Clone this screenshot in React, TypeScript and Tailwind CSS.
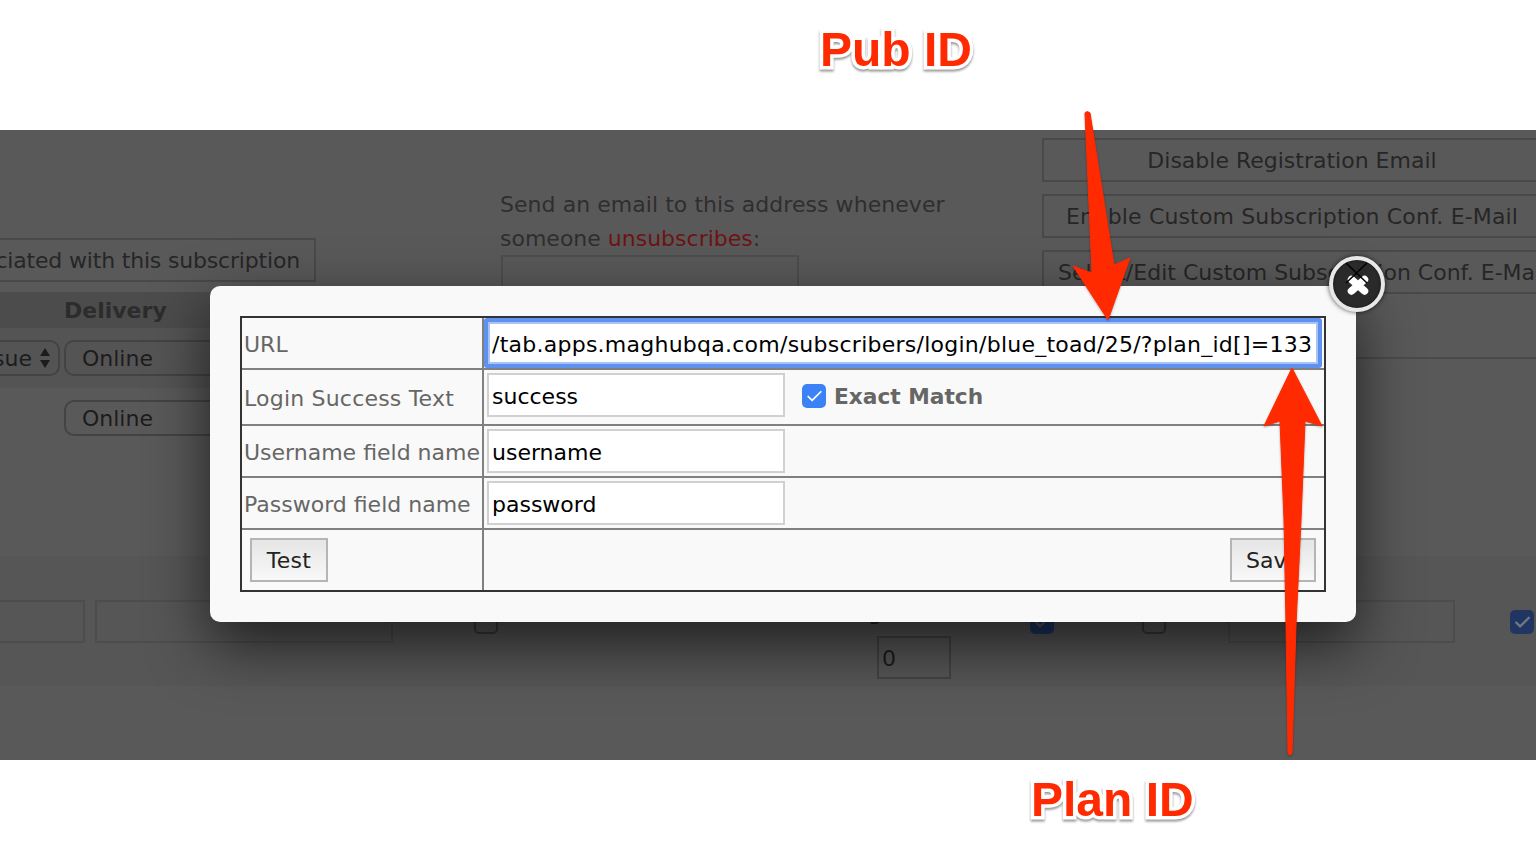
import React from 'react';
import { Check } from 'lucide-react';

const labelCell = 'p-0 pl-[2px] pt-[2px] text-[22px] text-[#666] border-r-2 border-[#808080] whitespace-nowrap';
const rowLine = 'border-b-2 border-[#808080]';
const fieldInput = 'block w-[298px] h-[44px] ml-[3px] px-[3px] pt-[2px] border-2 border-[#d0d0d0] bg-white text-[22px] text-black outline-none';
const dimButton = 'flex items-center justify-center w-[500px] h-[44px] shrink-0 border-2 border-[#4a494a] text-[22px] text-[#262626] whitespace-nowrap';
const dimSelect = 'flex items-center h-[36px] border-2 border-[#444344] rounded-[10px] text-[22px] text-[#1c1c1c]';
const dimInput = 'h-[43px] border-2 border-[#4e4d4e] shrink-0';

const BlueCheck = ({ className, stroke = 2.2 }: { className: string; stroke?: number }) => (
    <div className={`flex items-center justify-center w-[24px] h-[24px] rounded-[5px] ${className}`}>
        <Check className="w-[19px] h-[19px]" strokeWidth={stroke} />
    </div>
);

const Annotation = ({ text }: { text: string }) => (
    <span className="font-['Liberation_Sans',sans-serif] font-bold text-[48px] leading-none text-[#ff2a00] [-webkit-text-stroke:7px_white] [paint-order:stroke_fill] drop-shadow-[0_2px_1px_rgba(0,0,0,0.4)]">
        {text}
    </span>
);

const App = () => {
    return (
        <div className="relative w-[1536px] h-[842px] overflow-hidden bg-white font-['DejaVu_Sans',sans-serif]">
            {/* Top annotation */}
            <div className="h-[130px] pl-[820px] pt-[26px]">
                <Annotation text="Pub ID" />
            </div>

            {/* Dimmed page */}
            <div className="relative h-[630px] bg-[#5a595a] overflow-hidden">
                <div className="flex h-[426px]">
                    <div className="w-[500px] shrink-0 pt-[108px]">
                        <div className="flex items-center justify-end w-[316px] h-[44px] pr-[14px] border-2 border-l-0 border-[#4a494a] text-[22px] tracking-[-0.18px] text-[#262626] whitespace-nowrap">
                            ciated with this subscription
                        </div>
                        <div className="mt-[10px] h-[36px] pl-[64px] pt-[1px] bg-[#4d4c4d] text-[22px] leading-[36px] font-bold text-[#2c2c2c]">
                            Delivery
                        </div>
                        <div className="flex items-center gap-[4px] h-[60px] bg-[#555455]">
                            <div className={`${dimSelect} w-[60px] border-l-0 rounded-l-none justify-end gap-[8px] pr-[8px]`}>
                                sue
                                <svg className="w-[10px] h-[20px] shrink-0" viewBox="0 0 10 20" fill="#1c1c1c">
                                    <path d="M5 0L10 8H0zM5 20L0 12h10z" />
                                </svg>
                            </div>
                            <div className={`${dimSelect} w-[200px] pl-[16px]`}>Online</div>
                        </div>
                        <div className="flex items-center h-[60px] pl-[64px]">
                            <div className={`${dimSelect} w-[200px] pl-[16px]`}>Online</div>
                        </div>
                    </div>

                    <div className="w-[542px] shrink-0 pt-[58px]">
                        <p className="text-[22px] leading-[34px] text-[#2e2e2e] whitespace-nowrap">
                            <span className="tracking-[0.05px]">Send an email to this address whenever</span>
                            <br />
                            someone <span className="text-[#6c1414]">unsubscribes</span>:
                        </p>
                        <div className="-mt-[1px] ml-[1px] w-[298px] h-[44px] border-2 border-[#4e4d4e]" />
                    </div>

                    <div className="flex-1 min-w-0 flex flex-col gap-[12px] pt-[8px] overflow-hidden">
                        <div className={dimButton}>Disable Registration Email</div>
                        <div className={`${dimButton} tracking-[0.15px]`}>Enable Custom Subscription Conf. E-Mail</div>
                        <div className={`${dimButton} justify-start pl-[14px]`}>Select/Edit Custom Subscription Conf. E-Mail</div>
                        <div className="mt-[51px] border-t-2 border-[#4c4b4c]" />
                    </div>
                </div>

                {/* Darker row with the inputs */}
                <div className="flex h-[130px] bg-[#575657] pt-[44px]">
                    <div className={`${dimInput} w-[85px] border-l-0`} />
                    <div className={`${dimInput} w-[298px] ml-[10px]`} />
                    <div className="w-[24px] h-[34px] ml-[81px] border-2 border-[#3a393a] rounded-[5px] shrink-0" />
                    <div className="w-[74px] ml-[379px] shrink-0">
                        <div className="h-[36px] -ml-[9px] text-[22px] leading-[26px] text-[#1c1c1c]">g</div>
                        <div className="h-[43px] pl-[3px] border-2 border-[#444344] text-[22px] leading-[41px] text-[#1c1c1c]">0</div>
                    </div>
                    <BlueCheck className="ml-[79px] mt-[10px] bg-[#1f3564] text-[#565656] shrink-0" stroke={3} />
                    <div className="w-[24px] h-[34px] ml-[88px] border-2 border-[#3a393a] rounded-[5px] shrink-0" />
                    <div className={`${dimInput} w-[227px] ml-[62px]`} />
                    <BlueCheck className="ml-[55px] mt-[10px] bg-[#213563] text-[#6f7684] shrink-0" stroke={3} />
                </div>

                {/* Modal */}
                <div className="absolute left-[210px] top-[156px] w-[1146px] h-[336px] p-[30px] rounded-[10px] bg-[#f9f9f9] shadow-[0_22px_60px_rgba(0,0,0,0.65)]">
                    <div className="border-2 border-[#333]">
                        <table className="w-full table-fixed border-collapse">
                            <colgroup>
                                <col className="w-[241px]" />
                                <col />
                            </colgroup>
                            <tbody>
                                <tr className={`h-[50px] ${rowLine}`}>
                                    <td className={labelCell}>URL</td>
                                    <td className="p-0">
                                        <input
                                            readOnly
                                            value="/tab.apps.maghubqa.com/subscribers/login/blue_toad/25/?plan_id[]=133"
                                            className="block w-[838px] h-[50px] px-[4px] pt-[2px] border-[4px] border-[#5f91ee] rounded-[3px] bg-white text-[22px] tracking-[0.25px] text-black outline-none shadow-[inset_0_0_0_2px_#a8c3f4]"
                                        />
                                    </td>
                                </tr>
                                <tr className={`h-[56px] ${rowLine}`}>
                                    <td className={`${labelCell} tracking-[0.2px]`}>Login Success Text</td>
                                    <td className="p-0">
                                        <div className="flex items-center pb-[4px]">
                                            <input readOnly value="success" className={fieldInput} />
                                            <BlueCheck className="ml-[17px] mt-[2px] bg-[#3b82f6] text-white" />
                                            <span className="ml-[8px] mt-[4px] text-[21.7px] font-bold text-[#666]">Exact Match</span>
                                        </div>
                                    </td>
                                </tr>
                                <tr className={`h-[52px] ${rowLine}`}>
                                    <td className={labelCell}>Username field name</td>
                                    <td className="p-0">
                                        <input readOnly value="username" className={fieldInput} />
                                    </td>
                                </tr>
                                <tr className={`h-[52px] ${rowLine}`}>
                                    <td className={labelCell}>Password field name</td>
                                    <td className="p-0">
                                        <input readOnly value="password" className={fieldInput} />
                                    </td>
                                </tr>
                                <tr className="h-[61px]">
                                    <td className="p-0 pl-[8px] border-r-2 border-[#808080]">
                                        <button className="w-[78px] h-[44px] border-2 border-[#b5b5b5] bg-gradient-to-b from-[#e6e6e6] to-[#f8f8f8] text-[22px] tracking-[0.3px] text-[#222]">
                                            Test
                                        </button>
                                    </td>
                                    <td className="p-0 pr-[8px] text-right">
                                        <button className="w-[86px] h-[44px] border-2 border-[#b5b5b5] bg-gradient-to-b from-[#e6e6e6] to-[#f8f8f8] text-[22px] text-[#222]">
                                            Save
                                        </button>
                                    </td>
                                </tr>
                            </tbody>
                        </table>
                    </div>
                </div>

                {/* Close button */}
                <div className="absolute left-[1329px] top-[126px] flex items-center justify-center w-[56px] h-[56px] rounded-full bg-[#2a2a2a] border-[4px] border-[#e8e8e8] shadow-[0_0_5px_rgba(0,0,0,0.7),inset_0_0_3px_rgba(0,0,0,0.5)]">
                    <svg className="w-[36px] h-[36px] overflow-visible" viewBox="0 0 36 36">
                        <path d="M12.5 13.5L25.5 25M25.5 13.5L12.5 25" stroke="white" strokeWidth="7.5" strokeLinecap="round" />
                        <path d="M7-3l21 20M28-3L7 17" stroke="#000" strokeWidth="1.5" />
                    </svg>
                </div>
            </div>

            {/* Bottom annotation */}
            <div className="h-[82px] pl-[1031px] pt-[16px]">
                <Annotation text="Plan ID" />
            </div>

            {/* Red arrows drawn over the page */}
            <svg className="absolute inset-0 w-[1536px] h-[842px] pointer-events-none" viewBox="0 0 1536 842">
                <g fill="#ff2a00" stroke="#ff2a00" strokeWidth="1" strokeLinejoin="round" className="drop-shadow-[0_1px_1px_rgba(0,0,0,0.3)]">
                    <path d="M1085 113Q1087 110 1090 113L1114 265L1130 258L1108 320L1073 266L1092 273Z" />
                    <path d="M1292 368L1322 426L1305 421L1301 520L1296 625L1292 753Q1290 757 1288 753L1286 625L1284 520L1280 421L1264 426Z" />
                </g>
            </svg>
        </div>
    );
};

export default App;
